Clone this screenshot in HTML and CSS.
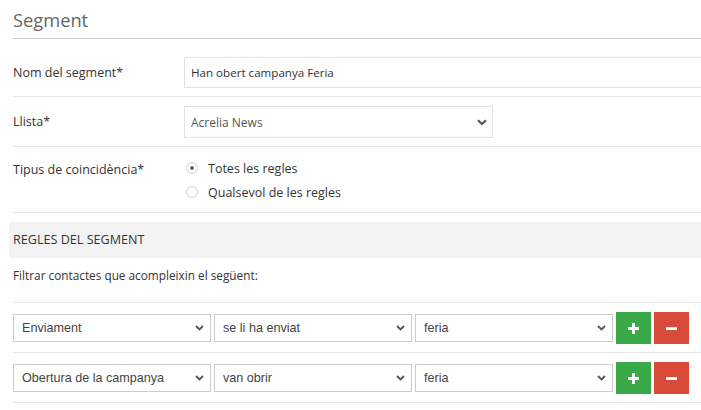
FILE: index.html
```html
<!DOCTYPE html>
<html lang="ca">
<head>
<meta charset="utf-8">
<title>Segment</title>
<link rel="stylesheet" href="styles.css">
</head>
<body>
<div class="page">
  <h1 class="title">Segment</h1>

  <div class="form-row first">
    <label class="label label-input">Nom del segment*</label>
    <div class="control"><input class="text-input" type="text" value="Han obert campanya Feria"></div>
  </div>

  <div class="form-row">
    <label class="label label-select">Llista*</label>
    <div class="control">
      <div class="sel sel-list">
        <select class="select"><option>Acrelia News</option></select>
        <svg class="chev" width="10" height="7" viewBox="0 0 10 7"><path d="M1 1.3 L5 5 L9 1.3" fill="none" stroke="#555" stroke-width="2.2"/></svg>
      </div>
    </div>
  </div>

  <div class="form-row">
    <label class="label label-radio">Tipus de coincidència*</label>
    <div class="control radios">
      <label class="radio"><span class="dot checked"></span>Totes les regles</label>
      <label class="radio"><span class="dot"></span>Qualsevol de les regles</label>
    </div>
  </div>

  <div class="band">REGLES DEL SEGMENT</div>
  <div class="filter">Filtrar contactes que acompleixin el següent:</div>

  <div class="rule">
    <div class="sel rsel"><select class="rselect"><option>Enviament</option></select><svg class="chev rchev" width="9" height="6" viewBox="0 0 9 6"><path d="M1 1 L4.5 4.5 L8 1" fill="none" stroke="#555" stroke-width="1.8"/></svg></div>
    <div class="sel rsel"><select class="rselect"><option>se li ha enviat</option></select><svg class="chev rchev" width="9" height="6" viewBox="0 0 9 6"><path d="M1 1 L4.5 4.5 L8 1" fill="none" stroke="#555" stroke-width="1.8"/></svg></div>
    <div class="sel rsel"><select class="rselect"><option>feria</option></select><svg class="chev rchev" width="9" height="6" viewBox="0 0 9 6"><path d="M1 1 L4.5 4.5 L8 1" fill="none" stroke="#555" stroke-width="1.8"/></svg></div>
    <button class="btn btn-add" type="button"><svg width="11" height="11" viewBox="0 0 11 11"><rect x="4" y="0" width="3" height="11" fill="#fff"/><rect x="0" y="4" width="11" height="3" fill="#fff"/></svg></button>
    <button class="btn btn-del" type="button"><svg width="11" height="11" viewBox="0 0 11 11"><rect x="0" y="4" width="11" height="3" fill="#fff"/></svg></button>
  </div>

  <div class="rule">
    <div class="sel rsel"><select class="rselect"><option>Obertura de la campanya</option></select><svg class="chev rchev" width="9" height="6" viewBox="0 0 9 6"><path d="M1 1 L4.5 4.5 L8 1" fill="none" stroke="#555" stroke-width="1.8"/></svg></div>
    <div class="sel rsel"><select class="rselect"><option>van obrir</option></select><svg class="chev rchev" width="9" height="6" viewBox="0 0 9 6"><path d="M1 1 L4.5 4.5 L8 1" fill="none" stroke="#555" stroke-width="1.8"/></svg></div>
    <div class="sel rsel"><select class="rselect"><option>feria</option></select><svg class="chev rchev" width="9" height="6" viewBox="0 0 9 6"><path d="M1 1 L4.5 4.5 L8 1" fill="none" stroke="#555" stroke-width="1.8"/></svg></div>
    <button class="btn btn-add" type="button"><svg width="11" height="11" viewBox="0 0 11 11"><rect x="4" y="0" width="3" height="11" fill="#fff"/><rect x="0" y="4" width="11" height="3" fill="#fff"/></svg></button>
    <button class="btn btn-del" type="button"><svg width="11" height="11" viewBox="0 0 11 11"><rect x="0" y="4" width="11" height="3" fill="#fff"/></svg></button>
  </div>
</div>
</body>
</html>
```

FILE: styles.css
```css
html, body {
  margin: 0;
  padding: 0;
  overflow: hidden;
  background: #fff;
}
body {
  font-family: "Open Sans", "Liberation Sans", sans-serif;
  color: #333;
}
.page {
  margin-left: 9px;
  width: 740px;
}
.title {
  margin: 0 0 0 4px;
  padding: 7px 0 6px;
  font-size: 18.3px;
  font-weight: 400;
  line-height: 25px;
  color: #666;
  border-bottom: 1px solid #c8c8c8;
}
.form-row {
  display: flex;
  align-items: flex-start;
  margin-left: 4px;
  padding: 9px 0 8px;
  border-bottom: 1px solid #e6e6e6;
}
.form-row.first {
  padding-top: 18px;
}
.label {
  width: 171px;
  flex: none;
  font-size: 12.5px;
  color: #333;
}
.label-input { line-height: 31px; }
.label-select { line-height: 31px; }
.label-radio { line-height: 27px; }
.control {
  flex: 1;
}
.text-input {
  box-sizing: border-box;
  width: 100%;
  height: 31px;
  border: 1px solid #e2e2e2;
  padding: 0 6px;
  font-family: "Open Sans", sans-serif;
  font-size: 11.6px;
  color: #333;
  outline: none;
}
.sel {
  position: relative;
}
.sel-list {
  width: 309px;
}
.select {
  appearance: none;
  -webkit-appearance: none;
  box-sizing: border-box;
  width: 100%;
  height: 32px;
  border: 1px solid #e2e2e2;
  border-radius: 0;
  background: #fff;
  padding: 0 6px;
  font-family: "Open Sans", sans-serif;
  font-size: 12px;
  color: #555;
  outline: none;
}
.chev {
  position: absolute;
  right: 6px;
  top: 13px;
  pointer-events: none;
}
.radios {
  display: flex;
  flex-direction: column;
}
.radio {
  display: flex;
  align-items: center;
  height: 24px;
  font-size: 12.5px;
  color: #333;
}
.dot {
  box-sizing: border-box;
  width: 12px;
  height: 12px;
  margin: 0 10px 0 2px;
  border: 1px solid #cfcfcf;
  border-radius: 50%;
  background: #fff;
  display: flex;
  align-items: center;
  justify-content: center;
}
.dot.checked::after {
  content: "";
  width: 4px;
  height: 4px;
  border-radius: 50%;
  background: #666;
}
.band {
  margin-top: 9px;
  height: 36px;
  line-height: 36px;
  padding-left: 4px;
  background: #f3f3f3;
  font-size: 12.6px;
  color: #333;
}
.filter {
  margin-left: 4px;
  padding: 9px 0 18px;
  line-height: 17px;
  font-size: 11.8px;
  color: #333;
  border-bottom: 1px solid #e6e6e6;
}
.rule {
  display: flex;
  align-items: center;
  gap: 3px;
  margin-left: 4px;
  padding: 9px 0 8px;
  border-bottom: 1px solid #e6e6e6;
}
.rsel {
  width: 198px;
  flex: none;
}
.rselect {
  appearance: none;
  -webkit-appearance: none;
  box-sizing: border-box;
  width: 100%;
  height: 28px;
  border: 1px solid #cbcbcb;
  border-radius: 0;
  background: #fff;
  padding: 0 8px;
  font-family: "Liberation Sans", Arial, sans-serif;
  font-size: 12.6px;
  color: #444;
  outline: none;
}
.rchev {
  right: 7px;
  top: 11px;
}
.btn {
  width: 35px;
  height: 32px;
  border: 0;
  padding: 0;
  display: flex;
  align-items: center;
  justify-content: center;
  flex: none;
}
.btn-add { background: #3aaa48; }
.btn-del { background: #da4a38; }
```
